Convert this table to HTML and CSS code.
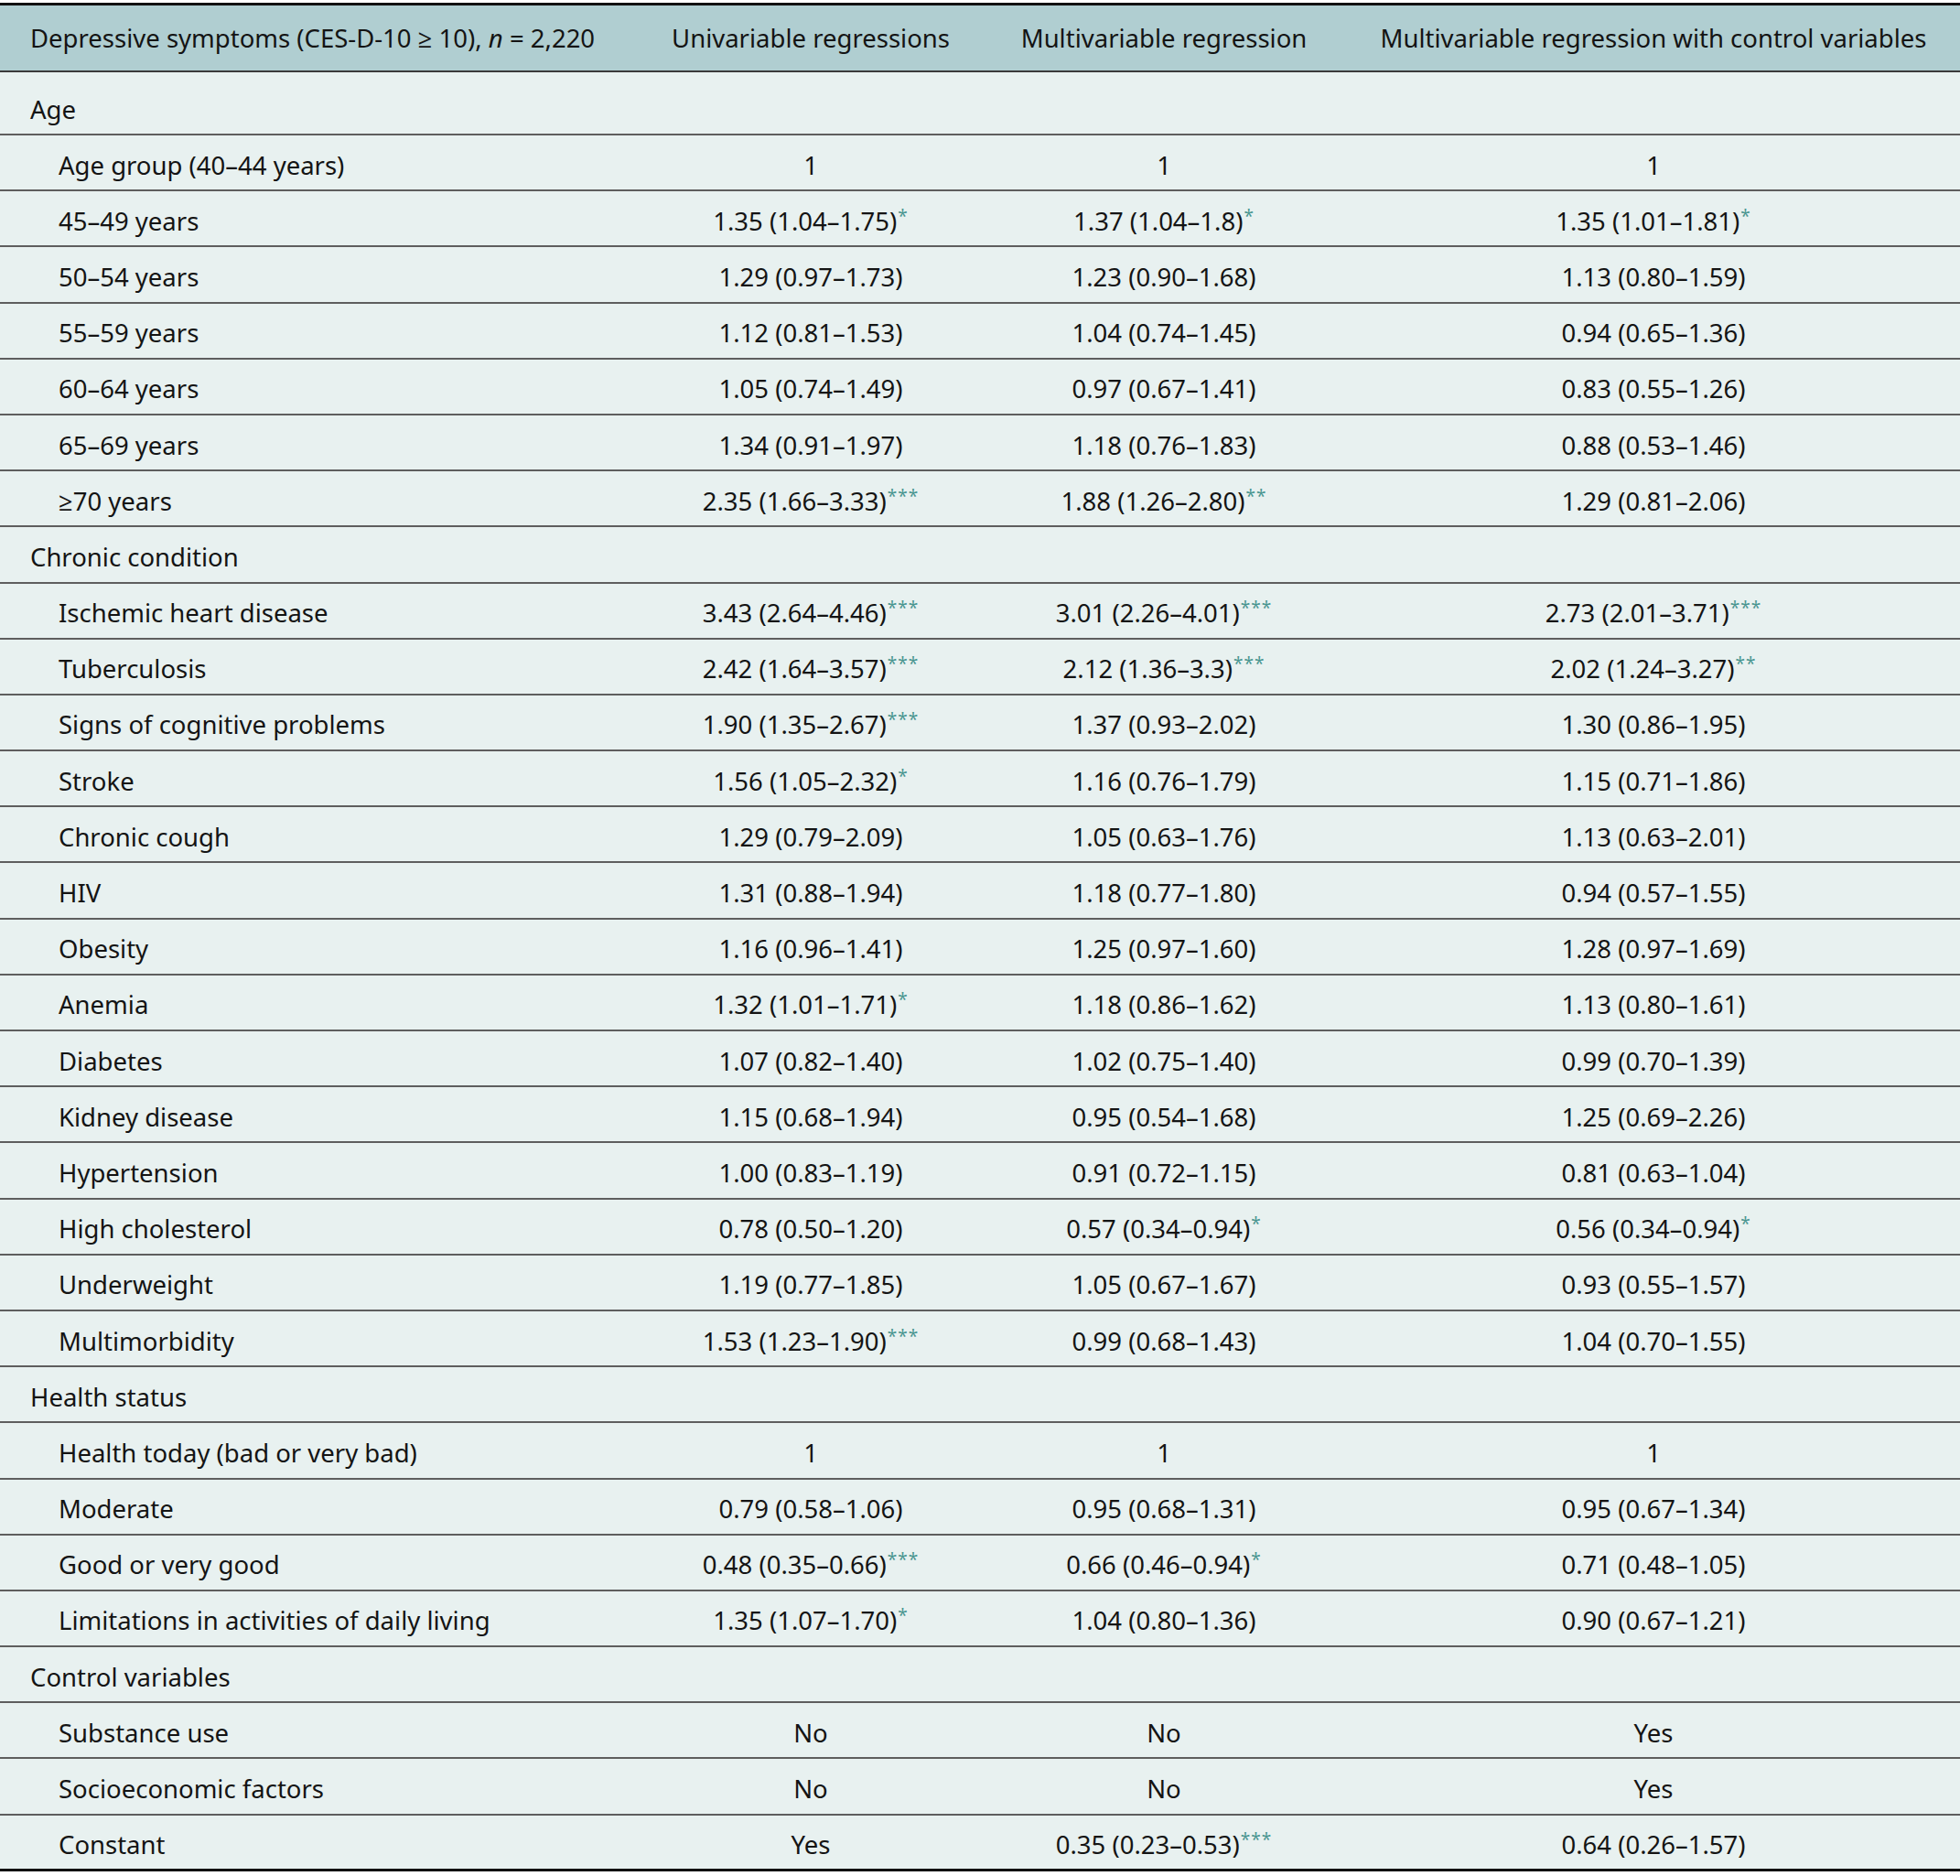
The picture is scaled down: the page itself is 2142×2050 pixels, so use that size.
FILE: index.html
```html
<!DOCTYPE html>
<html lang="en">
<head>
<meta charset="utf-8">
<title>Depressive symptoms regression table</title>
<link rel="stylesheet" href="styles.css">
</head>
<body>
<table class="reg">
  <colgroup>
    <col class="c-label">
    <col class="c-uni">
    <col class="c-multi">
    <col class="c-ctrl">
  </colgroup>
  <thead>
    <tr>
      <th class="lbl">Depressive symptoms (CES-D-10 ≥ 10), <i>n</i> = 2,220</th>
      <th>Univariable regressions</th>
      <th>Multivariable regression</th>
      <th>Multivariable regression with control variables</th>
    </tr>
  </thead>
  <tbody>
    <tr class="sec first"><td class="lbl">Age</td><td></td><td></td><td></td></tr>
    <tr><td class="lbl sub">Age group (40–44 years)</td><td>1</td><td>1</td><td>1</td></tr>
    <tr><td class="lbl sub">45–49 years</td><td>1.35 (1.04–1.75)<sup class="sig">*</sup></td><td>1.37 (1.04–1.8)<sup class="sig">*</sup></td><td>1.35 (1.01–1.81)<sup class="sig">*</sup></td></tr>
    <tr><td class="lbl sub">50–54 years</td><td>1.29 (0.97–1.73)</td><td>1.23 (0.90–1.68)</td><td>1.13 (0.80–1.59)</td></tr>
    <tr><td class="lbl sub">55–59 years</td><td>1.12 (0.81–1.53)</td><td>1.04 (0.74–1.45)</td><td>0.94 (0.65–1.36)</td></tr>
    <tr><td class="lbl sub">60–64 years</td><td>1.05 (0.74–1.49)</td><td>0.97 (0.67–1.41)</td><td>0.83 (0.55–1.26)</td></tr>
    <tr><td class="lbl sub">65–69 years</td><td>1.34 (0.91–1.97)</td><td>1.18 (0.76–1.83)</td><td>0.88 (0.53–1.46)</td></tr>
    <tr><td class="lbl sub">≥70 years</td><td>2.35 (1.66–3.33)<sup class="sig">***</sup></td><td>1.88 (1.26–2.80)<sup class="sig">**</sup></td><td>1.29 (0.81–2.06)</td></tr>
    <tr class="sec"><td class="lbl">Chronic condition</td><td></td><td></td><td></td></tr>
    <tr><td class="lbl sub">Ischemic heart disease</td><td>3.43 (2.64–4.46)<sup class="sig">***</sup></td><td>3.01 (2.26–4.01)<sup class="sig">***</sup></td><td>2.73 (2.01–3.71)<sup class="sig">***</sup></td></tr>
    <tr><td class="lbl sub">Tuberculosis</td><td>2.42 (1.64–3.57)<sup class="sig">***</sup></td><td>2.12 (1.36–3.3)<sup class="sig">***</sup></td><td>2.02 (1.24–3.27)<sup class="sig">**</sup></td></tr>
    <tr><td class="lbl sub">Signs of cognitive problems</td><td>1.90 (1.35–2.67)<sup class="sig">***</sup></td><td>1.37 (0.93–2.02)</td><td>1.30 (0.86–1.95)</td></tr>
    <tr><td class="lbl sub">Stroke</td><td>1.56 (1.05–2.32)<sup class="sig">*</sup></td><td>1.16 (0.76–1.79)</td><td>1.15 (0.71–1.86)</td></tr>
    <tr><td class="lbl sub">Chronic cough</td><td>1.29 (0.79–2.09)</td><td>1.05 (0.63–1.76)</td><td>1.13 (0.63–2.01)</td></tr>
    <tr><td class="lbl sub">HIV</td><td>1.31 (0.88–1.94)</td><td>1.18 (0.77–1.80)</td><td>0.94 (0.57–1.55)</td></tr>
    <tr><td class="lbl sub">Obesity</td><td>1.16 (0.96–1.41)</td><td>1.25 (0.97–1.60)</td><td>1.28 (0.97–1.69)</td></tr>
    <tr><td class="lbl sub">Anemia</td><td>1.32 (1.01–1.71)<sup class="sig">*</sup></td><td>1.18 (0.86–1.62)</td><td>1.13 (0.80–1.61)</td></tr>
    <tr><td class="lbl sub">Diabetes</td><td>1.07 (0.82–1.40)</td><td>1.02 (0.75–1.40)</td><td>0.99 (0.70–1.39)</td></tr>
    <tr><td class="lbl sub">Kidney disease</td><td>1.15 (0.68–1.94)</td><td>0.95 (0.54–1.68)</td><td>1.25 (0.69–2.26)</td></tr>
    <tr><td class="lbl sub">Hypertension</td><td>1.00 (0.83–1.19)</td><td>0.91 (0.72–1.15)</td><td>0.81 (0.63–1.04)</td></tr>
    <tr><td class="lbl sub">High cholesterol</td><td>0.78 (0.50–1.20)</td><td>0.57 (0.34–0.94)<sup class="sig">*</sup></td><td>0.56 (0.34–0.94)<sup class="sig">*</sup></td></tr>
    <tr><td class="lbl sub">Underweight</td><td>1.19 (0.77–1.85)</td><td>1.05 (0.67–1.67)</td><td>0.93 (0.55–1.57)</td></tr>
    <tr><td class="lbl sub">Multimorbidity</td><td>1.53 (1.23–1.90)<sup class="sig">***</sup></td><td>0.99 (0.68–1.43)</td><td>1.04 (0.70–1.55)</td></tr>
    <tr class="sec"><td class="lbl">Health status</td><td></td><td></td><td></td></tr>
    <tr><td class="lbl sub">Health today (bad or very bad)</td><td>1</td><td>1</td><td>1</td></tr>
    <tr><td class="lbl sub">Moderate</td><td>0.79 (0.58–1.06)</td><td>0.95 (0.68–1.31)</td><td>0.95 (0.67–1.34)</td></tr>
    <tr><td class="lbl sub">Good or very good</td><td>0.48 (0.35–0.66)<sup class="sig">***</sup></td><td>0.66 (0.46–0.94)<sup class="sig">*</sup></td><td>0.71 (0.48–1.05)</td></tr>
    <tr><td class="lbl sub">Limitations in activities of daily living</td><td>1.35 (1.07–1.70)<sup class="sig">*</sup></td><td>1.04 (0.80–1.36)</td><td>0.90 (0.67–1.21)</td></tr>
    <tr class="sec"><td class="lbl">Control variables</td><td></td><td></td><td></td></tr>
    <tr><td class="lbl sub">Substance use</td><td>No</td><td>No</td><td>Yes</td></tr>
    <tr><td class="lbl sub">Socioeconomic factors</td><td>No</td><td>No</td><td>Yes</td></tr>
    <tr class="last"><td class="lbl sub">Constant</td><td>Yes</td><td>0.35 (0.23–0.53)<sup class="sig">***</sup></td><td>0.64 (0.26–1.57)</td></tr>
  </tbody>
</table>
</body>
</html>
```
FILE: styles.css
```css
html, body {
  margin: 0;
  padding: 0;
  background: #ffffff;
}

body {
  font-family: "Noto Sans", "Open Sans", "DejaVu Sans", sans-serif;
  font-size: 27.5px;
  color: #141414;
}

.reg {
  width: 2142px;
  margin-top: 3px;
  table-layout: fixed;
  border-collapse: separate;
  border-spacing: 0;
  background: #e8f1f0;
}

.c-label { width: 700px; }
.c-uni { width: 372px; }
.c-multi { width: 400px; }
.c-ctrl { width: 670px; }

.reg thead tr {
  height: 76px;
}

.reg th {
  background: #b0ced1;
  font-weight: 400;
  text-align: center;
  padding: 0;
  border-top: 3px solid #111111;
  border-bottom: 2px solid #3a3a3a;
  white-space: nowrap;
}

.reg th.lbl {
  text-align: left;
  padding-left: 33px;
}

.reg tbody tr {
  height: 61.2px;
}

.reg td {
  padding: 5px 0 0 0;
  text-align: center;
  vertical-align: middle;
  border-bottom: 2px solid #5e5e5e;
  white-space: nowrap;
}

.reg td.lbl {
  text-align: left;
  padding-left: 33px;
}

.reg td.sub {
  padding-left: 64px;
}

.reg tr.first {
  height: 69px;
}

.reg tr.first td {
  padding-top: 14px;
}

.reg tr.last td {
  border-bottom: 3px solid #111111;
}

.sig {
  color: #4a9690;
  font-size: 19px;
  vertical-align: 9px;
  line-height: 0;
  letter-spacing: 1px;
  margin-left: 1px;
}
```
